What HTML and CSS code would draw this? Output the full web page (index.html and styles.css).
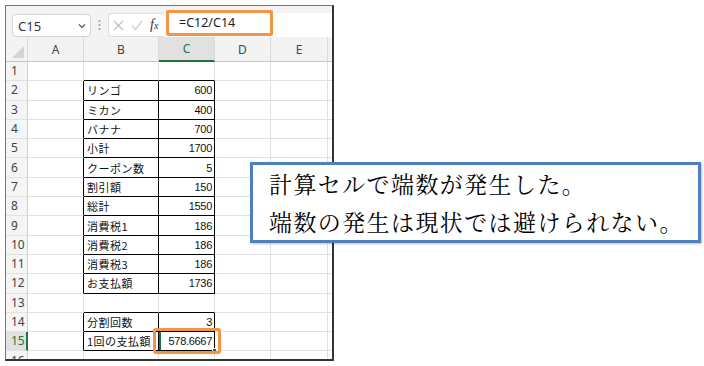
FILE: index.html
```html
<!DOCTYPE html>
<html>
  <head>
    <meta name="viewport" content="width=device-width, initial-scale=1.0">
    <link rel="stylesheet" href="styles.css">
  </head>
  <body>
    <div class="sheet">
      <!-- name box + formula bar -->
      <div class="bar">
        <div class="namebox">
          <span>C15</span>
          <svg width="8" height="6" viewBox="0 0 8 6"><polyline points="1,1.5 4,4.5 7,1.5" fill="none" stroke="#555" stroke-width="1.2"/></svg>
        </div>
        <svg class="dots" width="3" height="12" viewBox="0 0 3 12"><circle cx="1.5" cy="2" r="1" fill="#999"/><circle cx="1.5" cy="6" r="1" fill="#999"/><circle cx="1.5" cy="10" r="1" fill="#999"/></svg>
        <div class="fxbox">
          <svg width="11" height="11" viewBox="0 0 11 11"><path d="M1 1L10 10M10 1L1 10" stroke="#bdbdbd" stroke-width="1.1"/></svg>
          <svg width="12" height="11" viewBox="0 0 12 11"><polyline points="1,5.5 4.5,9.5 11,1" fill="none" stroke="#bdbdbd" stroke-width="1.1"/></svg>
          <span class="fx">f<small>x</small></span>
        </div>
        <div class="formula">
          <span class="formula-hl">=C12/C14</span>
        </div>
      </div>

      <table class="grid">
        <colgroup>
          <col style="width:22px"><col style="width:56px"><col style="width:75px"><col style="width:56px"><col style="width:56px"><col style="width:57px"><col>
        </colgroup>
        <thead>
          <tr>
            <th class="corner"><span class="tri"></span></th>
            <th>A</th><th>B</th><th class="on">C</th><th>D</th><th>E</th><th class="pad"></th>
          </tr>
        </thead>
        <tbody>
          <tr><td class="rh">1</td><td></td><td class="kt"></td><td class="kt"></td><td></td><td></td><td class="pad"></td></tr>
          <tr><td class="rh">2</td><td class="kl"></td><td class="k">リンゴ</td><td class="k n">600</td><td></td><td></td><td class="pad"></td></tr>
          <tr><td class="rh">3</td><td class="kl"></td><td class="k">ミカン</td><td class="k n">400</td><td></td><td></td><td class="pad"></td></tr>
          <tr><td class="rh">4</td><td class="kl"></td><td class="k">バナナ</td><td class="k n">700</td><td></td><td></td><td class="pad"></td></tr>
          <tr><td class="rh">5</td><td class="kl"></td><td class="k">小計</td><td class="k n">1700</td><td></td><td></td><td class="pad"></td></tr>
          <tr><td class="rh">6</td><td class="kl"></td><td class="k">クーポン数</td><td class="k n">5</td><td></td><td></td><td class="pad"></td></tr>
          <tr><td class="rh">7</td><td class="kl"></td><td class="k">割引額</td><td class="k n">150</td><td></td><td></td><td class="pad"></td></tr>
          <tr><td class="rh">8</td><td class="kl"></td><td class="k">総計</td><td class="k n">1550</td><td></td><td></td><td class="pad"></td></tr>
          <tr><td class="rh">9</td><td class="kl"></td><td class="k">消費税1</td><td class="k n">186</td><td></td><td></td><td class="pad"></td></tr>
          <tr><td class="rh">10</td><td class="kl"></td><td class="k">消費税2</td><td class="k n">186</td><td></td><td></td><td class="pad"></td></tr>
          <tr><td class="rh">11</td><td class="kl"></td><td class="k">消費税3</td><td class="k n">186</td><td></td><td></td><td class="pad"></td></tr>
          <tr><td class="rh">12</td><td class="kl"></td><td class="k">お支払額</td><td class="k n">1736</td><td></td><td></td><td class="pad"></td></tr>
          <tr><td class="rh">13</td><td></td><td class="kt"></td><td class="kt"></td><td></td><td></td><td class="pad"></td></tr>
          <tr><td class="rh">14</td><td class="kl"></td><td class="k">分割回数</td><td class="k n">3</td><td></td><td></td><td class="pad"></td></tr>
          <tr><td class="rh on">15</td><td class="kl"></td><td class="k">1回の支払額</td><td class="k n cur">578.6667<span class="handle"></span><span class="ring"></span></td><td></td><td></td><td class="pad"></td></tr>
          <tr><td class="rh">16</td><td></td><td></td><td></td><td></td><td></td><td class="pad"></td></tr>
        </tbody>
      </table>
    </div>

    <!-- callout -->
    <div class="note">
      <p>計算セルで端数が発生した。</p>
      <p>端数の発生は現状では避けられない。</p>
    </div>
  </body>
</html>
```

FILE: styles.css
```css
* {
  box-sizing: border-box;
}

body {
  margin: 0;
  background-color: #fff;
  font-family: "Noto Sans", "Noto Sans CJK JP", sans-serif;
  position: relative;
  width: 704px;
  height: 366px;
}

/* Spreadsheet window */
.sheet {
  margin: 5px 0 0 5px;
  width: 329px;
  height: 356px;
  border: 1px solid #777;
  border-right: 2px solid #333;
  border-bottom: 2px solid #333;
  overflow: hidden;
  background-color: #fff;
}

.bar {
  display: flex;
  align-items: flex-end;
  height: 31px;
  padding-left: 6px;
  background-color: #f3f3f3;
}

.namebox {
  display: flex;
  align-items: center;
  justify-content: space-between;
  width: 79px;
  height: 23px;
  padding: 0 4px 0 5px;
  background-color: #fff;
  border: 1px solid #d4d4d4;
  border-radius: 4px;
  font-size: 13px;
  color: #333;
}

.dots {
  margin: 0 7px 6px 7px;
}

.fxbox {
  display: flex;
  align-items: center;
  gap: 7px;
  width: 56px;
  height: 24px;
  padding-left: 4px;
  background-color: #fff;
  border: 1px solid #dedede;
  border-right: none;
  border-radius: 4px 0 0 4px;
}

.fx {
  font-family: "Liberation Serif", serif;
  font-style: italic;
  font-size: 14px;
  color: #333;
}

.fx small {
  font-size: 10px;
}

.formula {
  flex: 1;
  height: 24px;
  display: flex;
  align-items: flex-end;
  background-color: #fff;
}

.formula-hl {
  width: 107px;
  height: 26px;
  margin: 0 0 1px 2px;
  padding-left: 10px;
  border: 3px solid #f39545;
  border-radius: 2px;
  font-size: 12.5px;
  line-height: 20px;
  color: #222;
}

/* Grid */
.grid {
  table-layout: fixed;
  border-spacing: 0;
  border-collapse: separate;
  width: 326px;
}

.grid th {
  height: 25px;
  padding: 0;
  background-color: #f3f3f3;
  font-weight: normal;
  font-size: 12px;
  color: #444;
  border-right: 1px solid #dadada;
  border-bottom: 1px solid #c6c6c6;
}

.grid th.on {
  background-color: #e1e1e1;
  color: #217346;
  border-bottom: 2px solid #217346;
}

.grid th.pad,
.grid td.pad {
  border-right: none;
}

.corner {
  position: relative;
}

.tri {
  position: absolute;
  right: 3px;
  bottom: 3px;
  width: 0;
  height: 0;
  border-left: 12px solid transparent;
  border-bottom: 12px solid #d4d4d4;
}

.grid td {
  height: 19.3px;
  padding: 0 2px 0 3px;
  border-right: 1px solid #e1e1e1;
  border-bottom: 1px solid #e1e1e1;
  font-family: "Noto Sans CJK JP", sans-serif;
  font-size: 11px;
  letter-spacing: 0.5px;
  line-height: 16px;
  white-space: nowrap;
  color: #111;
}

.grid td.rh {
  padding-left: 5px;
  background-color: #f5f5f5;
  border-right-color: #cfcfcf;
  font-family: "Noto Sans", sans-serif;
  font-size: 12px;
  letter-spacing: 0;
  color: #444;
}

.grid td.rh.on {
  background-color: #e1e1e1;
  color: #217346;
  border-right: 2px solid #217346;
}

.grid td.n {
  text-align: right;
  font-family: "Liberation Sans", sans-serif;
  font-size: 11px;
  letter-spacing: -0.3px;
}

/* black cell borders */
.grid td.kl {
  border-right-color: #000;
}

.grid td.k {
  border-right-color: #000;
  border-bottom-color: #000;
}

.grid td.kt {
  border-bottom-color: #000;
}

/* active cell */
.grid td.cur {
  position: relative;
  box-shadow: inset 2px 0 #217346;
}

.handle {
  position: absolute;
  right: -3px;
  bottom: -3px;
  width: 5px;
  height: 5px;
  background-color: #217346;
  border: 1px solid #fff;
}

.ring {
  position: absolute;
  left: -6px;
  top: -4px;
  right: -7px;
  bottom: -4px;
  border: 3px solid #f39545;
  border-radius: 3px;
}

/* Callout */
.note {
  position: absolute;
  left: 250px;
  top: 162px;
  width: 451px;
  height: 81px;
  padding-left: 16px;
  background-color: #fff;
  border: 3px solid #4f7fc0;
  box-shadow: 1px 1px 2px rgba(0, 0, 0, 0.25);
  font-family: "Noto Serif CJK JP", "Noto Sans CJK JP", serif;
  font-size: 23px;
  letter-spacing: 1.4px;
  line-height: 37.5px;
  color: #000;
}

.note p {
  margin: 0;
}
```
